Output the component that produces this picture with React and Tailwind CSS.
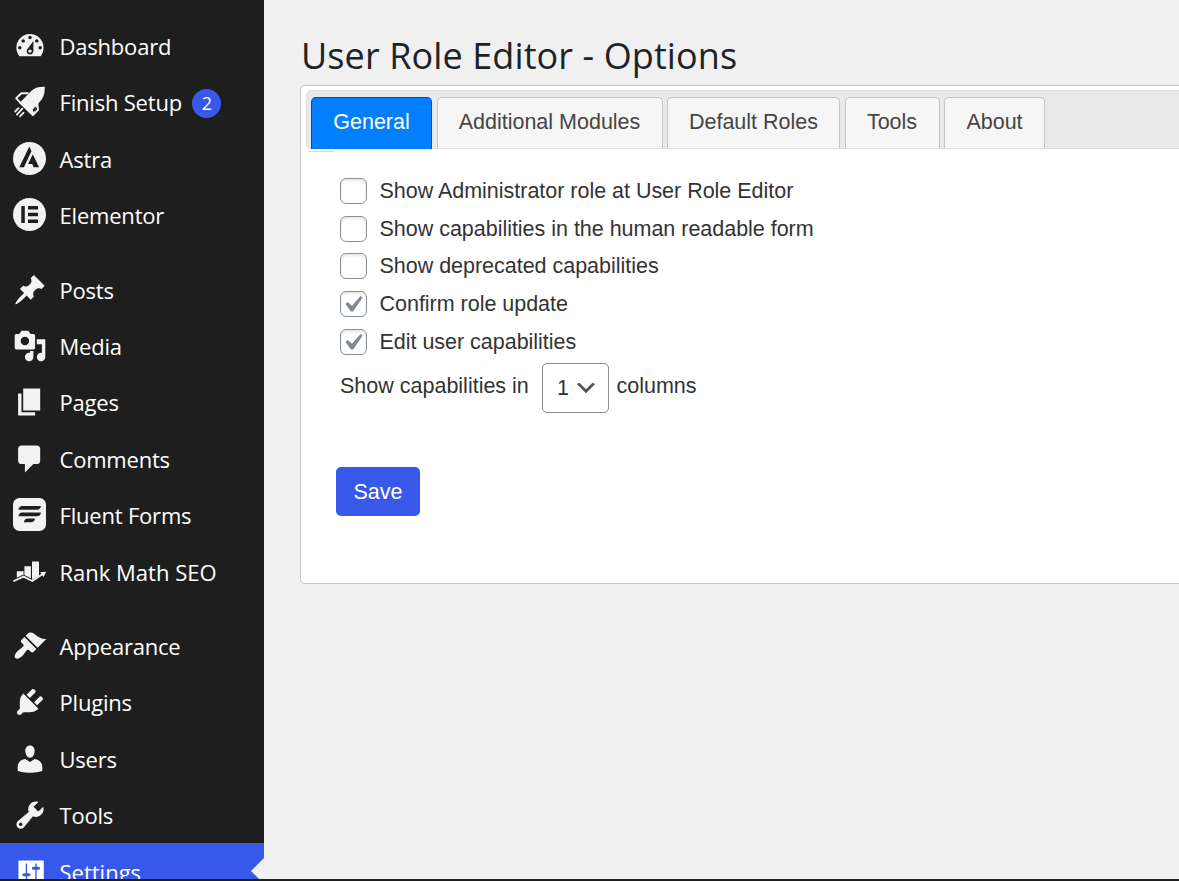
const icons = {
  dashboard:
    "M3.76 16h12.48c1.1-1.37 1.76-3.11 1.76-5 0-4.42-3.58-8-8-8s-8 3.58-8 8c0 1.89.66 3.63 1.76 5zM10 4c.55 0 1 .45 1 1s-.45 1-1 1-1-.45-1-1 .45-1 1-1zM6 6c.55 0 1 .45 1 1s-.45 1-1 1-1-.45-1-1 .45-1 1-1zm8 0c.55 0 1 .45 1 1s-.45 1-1 1-1-.45-1-1 .45-1 1-1zm-5.37 5.55L12 7v6c0 1.1-.9 2-2 2s-2-.9-2-2c0-.57.24-1.08.63-1.45zM4 10c.55 0 1 .45 1 1s-.45 1-1 1-1-.45-1-1 .45-1 1-1zm12 0c.55 0 1 .45 1 1s-.45 1-1 1-1-.45-1-1 .45-1 1-1zm-5 3c0-.55-.45-1-1-1s-1 .45-1 1 .45 1 1 1 1-.45 1-1z",
  posts:
    "M10.44 3.02l1.82-1.82 6.36 6.35-1.83 1.82c-1.05-.68-2.48-.57-3.41.36l-.75.75c-.92.93-1.04 2.35-.35 3.41l-1.83 1.82-2.41-2.41-2.8 2.79c-.42.42-3.38 2.71-3.8 2.29s1.86-3.39 2.28-3.81l2.79-2.79L4.1 9.36l1.83-1.82c1.05.69 2.48.57 3.4-.36l.75-.75c.93-.92 1.05-2.35.36-3.41z",
  media:
    "M13 11V4c0-.55-.45-1-1-1h-1.67L9 1H5L3.67 3H2c-.55 0-1 .45-1 1v7c0 .55.45 1 1 1h10c.55 0 1-.45 1-1zM7 4.5c1.38 0 2.5 1.12 2.5 2.5S8.38 9.5 7 9.5 4.5 8.38 4.5 7 5.62 4.5 7 4.5zM14 6h5v10.5c0 1.38-1.12 2.5-2.5 2.5S14 17.88 14 16.5s1.12-2.5 2.5-2.5c.17 0 .34.02.5.05V9h-3V6zm-4 8.05V13h2v3.5c0 1.38-1.12 2.5-2.5 2.5S7 17.88 7 16.5 8.12 14 9.5 14c.17 0 .34.02.5.05z",
  pages: "M6 15V2h10v13H6zm-1 1h8v2H3V5h2v11z",
  comments:
    "M5 2h9c1.1 0 2 .9 2 2v7c0 1.1-.9 2-2 2h-2l-5 5v-5H5c-1.1 0-2-.9-2-2V4c0-1.1.9-2 2-2z",
  appearance:
    "M14.48 11.06L7.41 3.99l1.5-1.5c.5-.56 2.3-.47 3.51.32 1.21.8 1.43 1.28 2.91 2.1 1.18.64 2.45 1.26 4.45.85zm-.71.71L6.7 4.7 4.93 6.47c-.39.39-.39 1.02 0 1.41l1.06 1.06c.39.39.39 1.03 0 1.42-.6.6-1.43 1.11-2.21 1.69-.35.26-.7.53-1.01.84C1.43 14.23.4 16.08 1.4 17.07c.99 1 2.84-.03 4.18-1.36.31-.31.58-.66.85-1.02.57-.78 1.08-1.61 1.69-2.21.39-.39 1.02-.39 1.41 0l1.06 1.06c.39.39 1.02.39 1.41 0z",
  plugins:
    "M13.11 4.36L9.87 7.6 8 5.73l3.24-3.24c.35-.34 1.05-.2 1.56.32.52.51.66 1.21.31 1.55zm-8 1.77l.91-1.12 9.01 9.01-1.19.84c-.71.71-2.63 1.16-3.82 1.16H6.14L4.9 17.26c-.59.59-1.54.59-2.12 0-.59-.58-.59-1.53 0-2.12l1.24-1.24v-3.88c0-1.13.4-3.19 1.09-3.89zm7.26 3.97l3.24-3.24c.34-.35 1.04-.21 1.55.31.52.51.66 1.21.31 1.55l-3.24 3.25z",
  users:
    "M10 9.25c-2.27 0-2.73-3.44-2.73-3.44C7 4.02 7.82 2 9.97 2c2.16 0 2.98 2.02 2.71 3.81 0 0-.41 3.44-2.68 3.44zm0 2.57L12.72 10c2.39 0 4.52 2.33 4.52 4.53v2.49s-3.65 1.13-7.24 1.13c-3.65 0-7.24-1.13-7.24-1.13v-2.49c0-2.25 1.94-4.48 4.47-4.48z",
  tools:
    "M16.68 9.77c-1.34 1.34-3.3 1.67-4.95.99l-5.41 6.52c-.99.99-2.59.99-3.58 0s-.99-2.59 0-3.57l6.52-5.42c-.68-1.65-.35-3.61.99-4.95 1.28-1.28 3.12-1.62 4.72-1.06l-2.89 2.89 2.82 2.82 2.86-2.87c.53 1.58.18 3.39-1.08 4.65zM3.81 16.21c.4.39 1.04.39 1.43 0 .4-.4.4-1.04 0-1.43-.39-.4-1.03-.4-1.43 0-.39.39-.39 1.03 0 1.43z",
  settings:
    "M3.2 3.2h14.9V17H3.2zM7.5 5v5.700H6.400c-1.200 0-1.200 1.800 0 1.800h1.100V15h.8v-2.500h1.100c1.200 0 1.200-1.800 0-1.800H8.300V5zM13.100 5v1.900H12c-1.200 0-1.200 1.800 0 1.800h1.100V15h.8V8.700H15c1.200 0 1.200-1.800 0-1.800h-1.100V5z",
};

function Dashicon({ name }) {
  return (
    <svg viewBox="0 0 20 20" className="-mx-[0.5px] mt-px size-[34px] shrink-0" fill="currentColor">
      <path fillRule="evenodd" d={icons[name]} />
    </svg>
  );
}

function RocketIcon() {
  return (
    <svg viewBox="0 0 33 33" className="size-[33px] shrink-0" fill="currentColor">
      <path d="M31.7 1.800C26 1.700 22 2.600 19 5.300L6.300 18.200 19.700 31.300 25.300 18.300C30 14.200 32 9.500 31.700 1.800z" />
      <path
        d="M15.500 8.300L8.300 8.300 3.200 13.300 8 18.300M24.300 17.300L25 24.900 19.700 30.300"
        fill="none"
        stroke="currentColor"
        strokeWidth="1.900"
        strokeLinejoin="round"
      />
      {/* gaps between the fins and the body */}
      <path d="M8.900 10.300h3.300L7.500 15.200 5.500 13.200zM22.700 21.300l.3 3.100-2.600 2.600-.7-2.400z" fill="#1e1e1e" />
      <path
        d="M5.500 23.200L2.200 26.500M9.300 23.700L3.900 29.600M10.600 27.700L7 31.300"
        fill="none"
        stroke="currentColor"
        strokeWidth="1.800"
        strokeLinecap="round"
      />
    </svg>
  );
}

function AstraIcon() {
  return (
    <svg viewBox="0 0 33 33" className="size-[33px] shrink-0">
      <circle cx="16.500" cy="16.500" r="16.500" fill="currentColor" />
      <path
        d="M16.300 4.500L6.300 25.300h4.600l7.600-16.100zM19.800 12.300l-4.700 9.700h4.100l1.400 3.300h5.500z"
        fill="#1e1e1e"
      />
    </svg>
  );
}

function ElementorIcon() {
  return (
    <svg viewBox="0 0 33 33" className="size-[33px] shrink-0">
      <circle cx="16.500" cy="16.500" r="16.500" fill="currentColor" />
      <path d="M8.300 8h3.500v17H8.300zM15 8h10v3.400H15zM15 14.800h10v3.400H15zM15 21.600h10V25H15z" fill="#1e1e1e" />
    </svg>
  );
}

function FluentIcon() {
  return (
    <svg viewBox="0 0 33 33" className="size-[33px] shrink-0">
      <rect width="33" height="33" rx="6.500" fill="currentColor" />
      <path
        d="M9 8h19c-.5 2.600-1.900 3.800-4.200 3.800H5.400C5.900 9.300 7 8 9 8zM9 14.400h19c-.5 2.600-1.900 3.800-4.200 3.800H5.400c.5-2.500 1.600-3.800 3.600-3.800zM14.500 20.500h7.500c-.5 2.600-1.700 3.800-4 3.800h-7.200c.5-2.500 1.700-3.800 3.700-3.800z"
        fill="#1e1e1e"
      />
    </svg>
  );
}

function RankMathIcon() {
  return (
    <svg viewBox="0 0 33 33" className="size-[33px] shrink-0" fill="currentColor">
      <path d="M3.800 16.200h6.800v3.300L3.800 22.800zM11.400 11.300h6.500v12l-6.500-3.300zM19 6.600h7v14.100l-6.200 3.900-.8-.4z" />
      <path d="M0.300 26.300L10.500 21.600 19.300 26 29.800 19" fill="none" stroke="currentColor" strokeWidth="1.800" />
      <path d="M27.200 17.300l6-.6-2.600 5.300z" />
    </svg>
  );
}

const menuGroups = [
  [
    { label: "Dashboard", icon: <Dashicon name="dashboard" /> },
    { label: "Finish Setup", icon: <RocketIcon />, count: 2 },
    { label: "Astra", icon: <AstraIcon /> },
    { label: "Elementor", icon: <ElementorIcon /> },
  ],
  [
    { label: "Posts", icon: <Dashicon name="posts" /> },
    { label: "Media", icon: <Dashicon name="media" /> },
    { label: "Pages", icon: <Dashicon name="pages" /> },
    { label: "Comments", icon: <Dashicon name="comments" /> },
    { label: "Fluent Forms", icon: <FluentIcon /> },
    { label: "Rank Math SEO", icon: <RankMathIcon />, tracking: "tracking-normal" },
  ],
  [
    { label: "Appearance", icon: <Dashicon name="appearance" /> },
    { label: "Plugins", icon: <Dashicon name="plugins" /> },
    { label: "Users", icon: <Dashicon name="users" /> },
    { label: "Tools", icon: <Dashicon name="tools" /> },
    { label: "Settings", icon: <Dashicon name="settings" />, active: true, tracking: "tracking-normal" },
  ],
];

const tabs = [
  { label: "General", width: "w-[121px]", active: true },
  { label: "Additional Modules", width: "w-[226px]" },
  { label: "Default Roles", width: "w-[173px]" },
  { label: "Tools", width: "w-[95px]" },
  { label: "About", width: "w-[101px]" },
];

const options = [
  { label: "Show Administrator role at User Role Editor" },
  { label: "Show capabilities in the human readable form" },
  { label: "Show deprecated capabilities" },
  { label: "Confirm role update", checked: true },
  { label: "Edit user capabilities", checked: true },
];

function MenuItem({ item }) {
  return (
    <li
      className={
        item.active
          ? "relative flex h-[56.4px] items-center bg-[#3858e9] pl-[13px] text-white"
          : "flex h-[56.4px] items-center pl-[13px] text-[#f3f1f1]"
      }
    >
      {item.icon}
      <span
        className={`ml-[13.5px] pt-px text-[22px] leading-none text-white ${item.tracking || "tracking-[-0.2px]"}`}
      >
        {item.label}
      </span>
      {item.count && (
        <span className="ml-[10.5px] mt-[4px] flex size-[29px] items-center justify-center rounded-full bg-[#3858e9] text-[18px] text-white">
          {item.count}
        </span>
      )}
      {item.active && (
        <span className="absolute right-0 top-[15px] border-y-[13px] border-r-[13px] border-y-transparent border-r-[#f0f0f1]" />
      )}
    </li>
  );
}

function Sidebar() {
  return (
    <nav className="w-[264px] shrink-0 bg-[#1e1e1e] pt-[17.4px] font-['Open_Sans',sans-serif]">
      {menuGroups.map((group, i) => (
        <ul key={i} className="mb-[18px]">
          {group.map((item) => (
            <MenuItem key={item.label} item={item} />
          ))}
        </ul>
      ))}
    </nav>
  );
}

function Checkbox({ checked }) {
  return (
    <span className="flex h-[26px] w-[27px] shrink-0 items-center justify-center rounded-[6px] border border-[#8c8f94] bg-white shadow-[inset_0_2px_3px_rgba(0,0,0,0.1)]">
      {checked && (
        <svg viewBox="0 0 20 20" className="mr-[2px] size-[33px] shrink-0" fill="#7e8993">
          <path d="M14.830 4.890l1.340.940-5.810 8.380H9.020L5.780 9.670l1.340-1.250 2.570 2.400z" />
        </svg>
      )}
    </span>
  );
}

function TabBar() {
  return (
    <div className="flex h-[59px] items-end rounded-l-[5px] border border-[#dddddd] bg-[#e9e9e9] pl-[4px]">
      {tabs.map((tab) => (
        <div
          key={tab.label}
          className={`${tab.width} mr-[4.5px] flex shrink-0 justify-center whitespace-nowrap rounded-t-[5px] border border-b-0 pt-[11px] text-[21.5px] leading-[26px] ${
            tab.active
              ? "-mb-px h-[52px] border-[#003eff] bg-[#007fff] text-white"
              : "h-[51px] border-[#c5c5c5] bg-[#f6f6f6] text-[#454545]"
          }`}
        >
          {tab.label}
        </div>
      ))}
    </div>
  );
}

export default function App() {
  return (
    <div className="h-[881px] w-[1179px] overflow-hidden border-b-2 border-[#1e1e1e] bg-[#f0f0f1]">
      <div className="flex h-[879px] overflow-hidden">
        <Sidebar />

        <main className="w-[915px] shrink-0 overflow-hidden pl-[36px]">
          <h1 className="ml-px mt-[31px] h-[54px] whitespace-nowrap font-['Open_Sans',sans-serif] text-[36px] leading-[50px] tracking-[0.1px] text-[#1d2327]">
            User Role Editor - Options
          </h1>

          <div className="h-[499px] w-[920px] rounded-[5px] border border-[#c5c5c5] bg-white pl-[5px] pt-[4px] font-['Liberation_Sans',Arial,sans-serif] text-[21.5px] text-[#333333]">
            <TabBar />
            <div className="ml-[2px] mt-[2px] h-px w-[27px] bg-[#c5dbec]" />

            <div className="pl-[34px] pt-[20px]">
              {options.map((option) => (
                <label key={option.label} className="flex h-[37.8px] items-center">
                  <Checkbox checked={option.checked} />
                  <span className="ml-[12.5px] whitespace-nowrap tracking-[-0.02px]">{option.label}</span>
                </label>
              ))}

              <div className="mt-[2px] flex items-center">
                <span className="w-[202px] whitespace-nowrap pb-[4px]">Show capabilities in</span>
                <span className="flex h-[50px] w-[67px] items-center rounded-[5px] border border-[#8c8f94] pl-[14px] text-[#2c3338]">
                  1
                  <svg viewBox="0 0 20 20" className="ml-[4px] mt-px size-[26px]" fill="#555555">
                    <path d="M5 6l5 5 5-5 2 1-7 7-7-7 2-1z" />
                  </svg>
                </span>
                <span className="ml-[7.5px] pb-[4px]">columns</span>
              </div>
            </div>

            <button className="ml-[30px] mt-[54px] h-[49px] w-[84px] rounded-[5px] bg-[#3858e9] pt-[2px] text-white">
              Save
            </button>
          </div>
        </main>
      </div>
    </div>
  );
}
